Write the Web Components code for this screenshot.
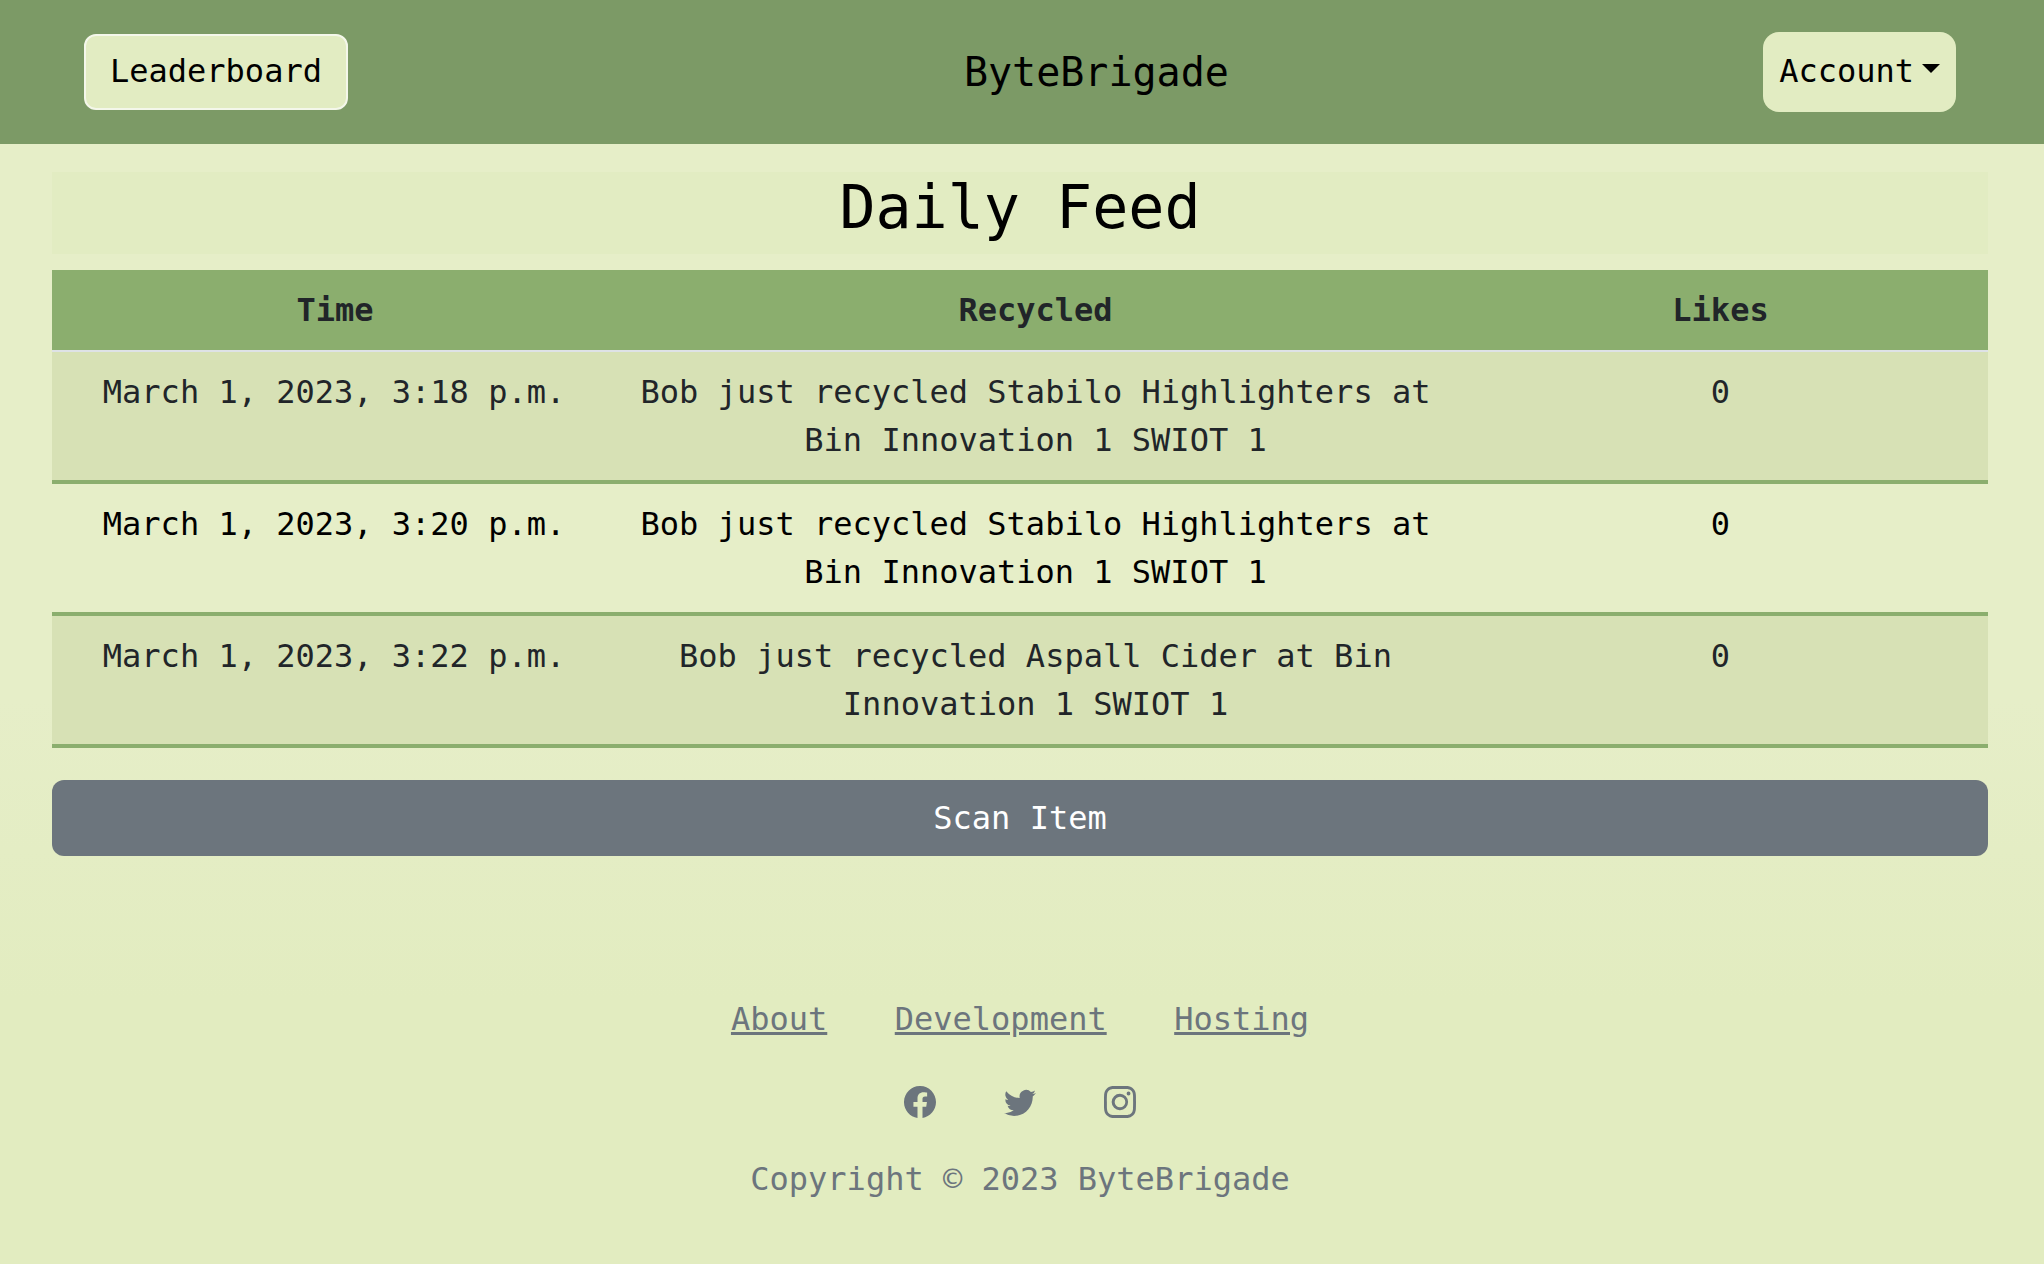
<!DOCTYPE html>
<html lang="en">
<head>
<meta charset="utf-8">
<title>ByteBrigade</title>
<style>
  html, body { margin: 0; height: 100%; }
  body {
    min-height: 1264px;
    font: 32px/48px "DejaVu Sans Mono", monospace;
    color: #000;
    background: linear-gradient(#e6eec8 0, #e6eec8 700px, #e2ecc0 1000px);
  }
</style>
</head>
<body>
<site-header></site-header>
<feed-page></feed-page>
<site-footer></site-footer>

<script>
const headerTemplate = document.createElement('template');
headerTemplate.innerHTML = `
  <style>
    :host {
      display: flex;
      align-items: center;
      height: 144px;
      padding: 0 88px 0 84px;
      background-color: #7c9a66;
    }
    a { color: #000; text-decoration: none; }
    .leaderboard {
      box-sizing: border-box;
      padding: 11px 24px 13px;
      border: 2px solid #f4f7ea;
      border-radius: 12px;
      background-color: #e2ecc2;
    }
    .brand {
      margin-left: 616px;
      font-size: 40px;
      line-height: 60px;
    }
    .account {
      display: flex;
      align-items: center;
      margin-left: auto;
      padding: 15px 16px 17px;
      border-radius: 16px;
      background-color: #e2ecc2;
    }
    .caret {
      width: 0;
      height: 0;
      margin: -6px 0 0 8px;
      border-top: 9.6px solid #000;
      border-left: 9.6px solid transparent;
      border-right: 9.6px solid transparent;
    }
  </style>
  <a class="leaderboard" href="#">Leaderboard</a>
  <span class="brand">ByteBrigade</span>
  <a class="account" href="#">Account<span class="caret"></span></a>
`;

class SiteHeader extends HTMLElement {
  constructor() {
    super();
    this.attachShadow({ mode: 'open' }).appendChild(headerTemplate.content.cloneNode(true));
  }
}
customElements.define('site-header', SiteHeader);

const feedTemplate = document.createElement('template');
feedTemplate.innerHTML = `
  <style>
    :host {
      display: block;
      padding: 28px 56px 0 52px;
    }
    h1 {
      margin: 0 0 16px;
      height: 82px;
      font-size: 60px;
      font-weight: 400;
      line-height: 70px;
      text-align: center;
      background-color: #e2ecc2;
    }
    .head {
      display: grid;
      grid-template-columns: 566px 835px 535px;
      height: 80px;
      border-bottom: 2px solid #dee2e6;
      background-color: #8bae6e;
      color: #212529;
      font-weight: 700;
      line-height: 80px;
      text-align: center;
    }
    button {
      display: block;
      box-sizing: border-box;
      width: 100%;
      height: 76px;
      margin-top: 32px;
      padding: 0;
      border: 0;
      border-radius: 12px;
      background-color: #6c757d;
      color: #fff;
      font: inherit;
    }
  </style>
  <h1>Daily Feed</h1>
  <div class="head"><span>Time</span><span>Recycled</span><span>Likes</span></div>
  <slot></slot>
  <button type="button">Scan Item</button>
`;

class FeedPage extends HTMLElement {
  constructor() {
    super();
    this.attachShadow({ mode: 'open' }).appendChild(feedTemplate.content.cloneNode(true));
  }

  connectedCallback() {
    const rows = [
      ['March 1, 2023, 3:18 p.m.', 'Bob just recycled Stabilo Highlighters at Bin Innovation 1 SWIOT 1', true],
      ['March 1, 2023, 3:20 p.m.', 'Bob just recycled Stabilo Highlighters at Bin Innovation 1 SWIOT 1', false],
      ['March 1, 2023, 3:22 p.m.', 'Bob just recycled Aspall Cider at Bin Innovation 1 SWIOT 1', true],
    ];
    rows.forEach(([time, text, striped]) => {
      const row = document.createElement('feed-row');
      row.setAttribute('time', time);
      row.setAttribute('text', text);
      if (striped) row.setAttribute('striped', '');
      this.appendChild(row);
    });
  }
}

const rowTemplate = document.createElement('template');
rowTemplate.innerHTML = `
  <style>
    :host {
      display: grid;
      grid-template-columns: 566px 835px 535px;
      border-bottom: 4px solid #8bae6e;
      color: #000;
      text-align: center;
    }
    :host([striped]) {
      background-color: #d7e1b5;
      color: #212529;
    }
    div { padding: 16px; height: 96px; }
    .time { padding-right: 18px; }
  </style>
  <div class="time"></div>
  <div class="text"></div>
  <div class="likes">0</div>
`;

class FeedRow extends HTMLElement {
  constructor() {
    super();
    this.attachShadow({ mode: 'open' }).appendChild(rowTemplate.content.cloneNode(true));
  }

  connectedCallback() {
    this.shadowRoot.querySelector('.time').textContent = this.getAttribute('time');
    this.shadowRoot.querySelector('.text').textContent = this.getAttribute('text');
  }
}
customElements.define('feed-row', FeedRow);
customElements.define('feed-page', FeedPage);

const footerTemplate = document.createElement('template');
footerTemplate.innerHTML = `
  <style>
    :host {
      display: block;
      padding: 139px 4px 0 0;
      color: #6c757d;
      text-align: center;
    }
    nav { display: flex; justify-content: center; gap: 67.5px; }
    a { color: inherit; }
    .social {
      display: flex;
      justify-content: center;
      gap: 68px;
      margin-top: 43px;
    }
    svg { display: block; width: 32px; height: 32px; fill: currentColor; }
    p { margin: 37px 0 0; }
  </style>
  <nav>
    <a href="#">About</a>
    <a href="#">Development</a>
    <a href="#">Hosting</a>
  </nav>
  <div class="social">
    <svg viewBox="0 0 16 16"><path d="M16 8.049c0-4.446-3.582-8.05-8-8.05C3.58 0-.002 3.603-.002 8.05c0 4.017 2.926 7.347 6.75 7.951v-5.625h-2.03V8.05H6.75V6.275c0-2.017 1.195-3.131 3.022-3.131.876 0 1.791.157 1.791.157v1.98h-1.009c-.993 0-1.303.621-1.303 1.258v1.51h2.218l-.354 2.326H9.25V16c3.824-.604 6.75-3.934 6.75-7.951z"/></svg>
    <svg viewBox="0 0 16 16"><path d="M5.026 15c6.038 0 9.341-5.003 9.341-9.334 0-.14 0-.282-.006-.422A6.685 6.685 0 0 0 16 3.542a6.658 6.658 0 0 1-1.889.518 3.301 3.301 0 0 0 1.447-1.817 6.533 6.533 0 0 1-2.087.793A3.286 3.286 0 0 0 7.875 6.03a9.325 9.325 0 0 1-6.767-3.429 3.289 3.289 0 0 0 1.018 4.382A3.323 3.323 0 0 1 .64 6.575v.045a3.288 3.288 0 0 0 2.632 3.218 3.203 3.203 0 0 1-.865.115 3.23 3.23 0 0 1-.614-.057 3.283 3.283 0 0 0 3.067 2.277A6.588 6.588 0 0 1 .78 13.58a6.32 6.32 0 0 1-.78-.045A9.344 9.344 0 0 0 5.026 15z"/></svg>
    <svg viewBox="0 0 16 16"><path d="M8 0C5.829 0 5.556.01 4.703.048 3.85.088 3.269.222 2.76.42a3.917 3.917 0 0 0-1.417.923A3.927 3.927 0 0 0 .42 2.76C.222 3.268.087 3.85.048 4.7.01 5.555 0 5.827 0 8.001c0 2.172.01 2.444.048 3.297.04.852.174 1.433.372 1.942.205.526.478.972.923 1.417.444.445.89.719 1.416.923.51.198 1.09.333 1.942.372C5.555 15.99 5.827 16 8 16s2.444-.01 3.298-.048c.851-.04 1.434-.174 1.943-.372a3.916 3.916 0 0 0 1.416-.923c.445-.445.718-.891.923-1.417.197-.509.332-1.09.372-1.942C15.99 10.445 16 10.173 16 8s-.01-2.445-.048-3.299c-.04-.851-.175-1.433-.372-1.941a3.926 3.926 0 0 0-.923-1.417A3.911 3.911 0 0 0 13.24.42c-.51-.198-1.092-.333-1.943-.372C10.443.01 10.172 0 7.998 0h.003zm-.717 1.442h.718c2.136 0 2.389.007 3.232.046.78.035 1.204.166 1.486.275.373.145.64.319.92.599.28.28.453.546.598.92.11.281.24.705.275 1.485.039.843.047 1.096.047 3.231s-.008 2.389-.047 3.232c-.035.78-.166 1.203-.275 1.485a2.47 2.47 0 0 1-.599.919c-.28.28-.546.453-.92.598-.28.11-.704.24-1.485.276-.843.038-1.096.047-3.232.047s-2.39-.009-3.233-.047c-.78-.036-1.203-.166-1.485-.276a2.478 2.478 0 0 1-.92-.598 2.48 2.48 0 0 1-.6-.92c-.109-.281-.24-.705-.275-1.485-.038-.843-.046-1.096-.046-3.233 0-2.136.008-2.388.046-3.231.036-.78.166-1.204.276-1.486.145-.373.319-.64.599-.92.28-.28.546-.453.92-.598.282-.11.705-.24 1.485-.276.738-.034 1.024-.044 2.515-.045v.002zm4.988 1.328a.96.96 0 1 0 0 1.92.96.96 0 0 0 0-1.92zm-4.27 1.122a4.109 4.109 0 1 0 0 8.217 4.109 4.109 0 0 0 0-8.217zm0 1.441a2.667 2.667 0 1 1 0 5.334 2.667 2.667 0 0 1 0-5.334z"/></svg>
  </div>
  <p>Copyright © 2023 ByteBrigade</p>
`;

class SiteFooter extends HTMLElement {
  constructor() {
    super();
    this.attachShadow({ mode: 'open' }).appendChild(footerTemplate.content.cloneNode(true));
  }
}
customElements.define('site-footer', SiteFooter);
</script>
</body>
</html>
